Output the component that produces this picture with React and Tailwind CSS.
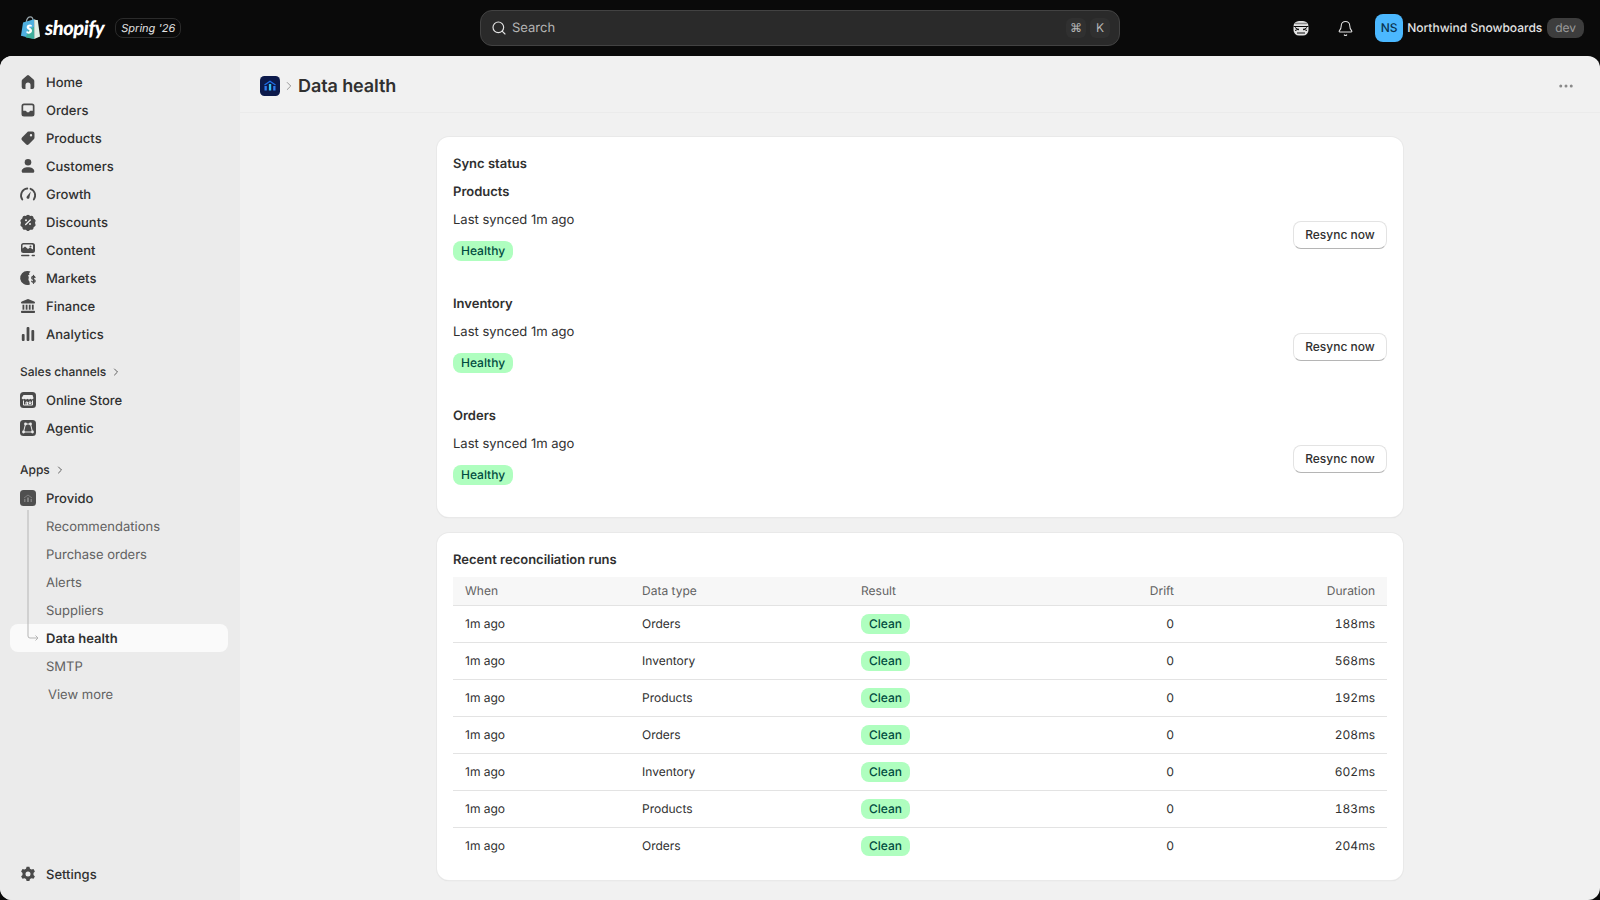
import React from "react";
import { Search, Bell, ChevronRight, Ellipsis } from "lucide-react";

const inter = "font-['Inter',sans-serif] [text-rendering:geometricPrecision]";

// sidebar icons, all on a 20 box
const HomeIcon = () => (
  <path d="M9 3.400a1.500 1.500 0 0 1 2 0l4.600 4a2 2 0 0 1 .7 1.500V15a2 2 0 0 1-2 2H12.500v-4a2.500 2.500 0 0 0-5 0v4H5.700a2 2 0 0 1-2-2V8.900a2 2 0 0 1 .7-1.500z" />
);
const OrdersIcon = () => (
  <path fillRule="evenodd" d="M6 3.500h8A2.500 2.500 0 0 1 16.500 6v8a2.500 2.500 0 0 1-2.500 2.500H6A2.500 2.500 0 0 1 3.500 14V6A2.500 2.500 0 0 1 6 3.500m0 1.700a.8.8 0 0 0-.8.8v4.800h2.300c.5 0 .8.300 1 .7l.4.8h2.200l.4-.8c.2-.4.5-.7 1-.7h2.300V6a.8.8 0 0 0-.8-.8z" />
);
const ProductsIcon = () => (
  <path fillRule="evenodd" d="M10.500 3.500h4A2 2 0 0 1 16.500 5.500v4a2.500 2.500 0 0 1-.7 1.700l-5 5a2 2 0 0 1-2.800 0l-4-4a2 2 0 0 1 0-2.800l5-5a2.500 2.500 0 0 1 1.500-.9M13 6a1.200 1.200 0 1 0 0 2.400A1.200 1.200 0 0 0 13 6" />
);
const CustomersIcon = () => (
  <>
    <circle cx="10" cy="6.300" r="3.300" />
    <path d="M3.700 15.200c0-2.500 2.800-4 6.300-4s6.300 1.500 6.300 4c0 1-.7 1.600-1.600 1.600H5.300c-.9 0-1.600-.6-1.600-1.600" />
  </>
);
const GrowthIcon = () => (
  <>
    <path fill="none" stroke="currentColor" strokeWidth="1.800" strokeLinecap="round" d="M4.300 15.500a7 7 0 0 1 5-11M12.500 4.800a7 7 0 0 1 3.300 10.700" />
    <path d="M12.800 7.500l-1.300 5.600a1.500 1.500 0 1 1-2.700-.6z" />
  </>
);
const DiscountsIcon = () => (
  <>
    <path fillRule="evenodd" d="M8.700 3.200a2 2 0 0 1 2.600 0l.9.7 1.200-.1a2 2 0 0 1 2.100 1.700l.2 1.100 1 .7a2 2 0 0 1 .7 2.500l-.5 1 .5 1.100a2 2 0 0 1-.7 2.500l-1 .6-.2 1.200a2 2 0 0 1-2.100 1.600l-1.200-.1-.9.800a2 2 0 0 1-2.600 0l-.9-.8-1.200.1a2 2 0 0 1-2.100-1.600l-.2-1.200-1-.6a2 2 0 0 1-.7-2.500l.5-1.100-.5-1a2 2 0 0 1 .7-2.500l1-.7.2-1.100a2 2 0 0 1 2.100-1.700l1.200.1z" />
    <path fill="none" stroke="#ebebeb" strokeWidth="1.400" strokeLinecap="round" d="M12.300 8l-4.600 4.400" />
    <circle cx="8" cy="8.300" r="1" fill="#ebebeb" />
    <circle cx="12" cy="12.100" r="1" fill="#ebebeb" />
  </>
);
const ContentIcon = () => (
  <>
    <path fillRule="evenodd" d="M5.500 3h9A2.500 2.500 0 0 1 17 5.500v5a2.500 2.500 0 0 1-2.500 2.500h-9A2.500 2.500 0 0 1 3 10.500v-5A2.500 2.500 0 0 1 5.500 3m0 1.500a1 1 0 0 0-1 1v3l2.500-2 3 2.500 2-1.500 3 2V5.500a1 1 0 0 0-1-1z" />
    <circle cx="12.500" cy="6.500" r="1" />
    <rect x="3" y="14.800" width="8.500" height="1.500" rx=".75" />
    <rect x="13.500" y="14.800" width="3.500" height="1.500" rx=".75" />
  </>
);
const MarketsIcon = () => (
  <>
    <path d="M9.800 3a7 7 0 0 1 2.700.5L11 5.200l.6 1.300-1.600 1 .8 1.500-.4 3 1 1.500.5 2.900a7 7 0 1 1-2.100-13.400" />
    <path fill="none" stroke="currentColor" strokeWidth="1.300" strokeLinecap="round" d="M17 9.500c-.3-.7-.9-1-1.600-1-1 0-1.700.6-1.700 1.400 0 1.900 3.500 1 3.500 3 0 .8-.8 1.400-1.800 1.400-.7 0-1.400-.4-1.700-1M15.500 7.300v8" />
  </>
);
const FinanceIcon = () => (
  <>
    <path d="M9.300 3.200a2 2 0 0 1 1.400 0l5.500 2.300c.5.200.8.600.8 1.100v.2c0 .4-.3.700-.7.700H3.700c-.4 0-.7-.3-.7-.7v-.2c0-.5.300-.9.800-1.100z" />
    <rect x="4.500" y="8.700" width="1.800" height="5" />
    <rect x="7.700" y="8.700" width="1.800" height="5" />
    <rect x="10.800" y="8.700" width="1.800" height="5" />
    <rect x="13.900" y="8.700" width="1.800" height="5" />
    <rect x="3" y="14.700" width="14" height="2.300" rx=".8" />
  </>
);
const AnalyticsIcon = () => (
  <>
    <rect x="3.800" y="10" width="2.800" height="7" rx="1" />
    <rect x="8.600" y="3" width="2.800" height="14" rx="1" />
    <rect x="13.400" y="6" width="2.800" height="11" rx="1" />
  </>
);
const SettingsIcon = () => (
  <path fillRule="evenodd" d="M8.600 2.800h2.800l.6 2 1.500.8 2-.5 1.400 2.400-1.400 1.500v1.900l1.400 1.500-1.400 2.400-2-.5-1.500.8-.6 2H8.600l-.6-2-1.500-.8-2 .5-1.400-2.400 1.400-1.500V9l-1.400-1.500 1.400-2.400 2 .5L8 4.800zM10 7.500a2.500 2.500 0 1 0 0 5 2.500 2.500 0 0 0 0-5" />
);

const Glyph = ({ children }) => (
  <svg viewBox="0 0 20 20" fill="currentColor" className="w-5 h-5 shrink-0 text-[#4a4a4a]">
    {children}
  </svg>
);

// rounded square tiles used by sales channels and apps
const OnlineStoreIcon = () => (
  <svg viewBox="0 0 16 16" className="w-4 h-4 shrink-0">
    <rect width="16" height="16" rx="3.500" fill="#4a4a4a" />
    <path d="M3.500 3h9l1 3a1.700 1.700 0 0 1-3 .8 1.800 1.800 0 0 1-3 0 1.800 1.800 0 0 1-3 0 1.700 1.700 0 0 1-2.900-.8z" fill="#ebebeb" />
    <path d="M3.500 8.500v4.500h9V8.500M6 13v-3h1.500v3M9 10h2v1.500H9z" fill="none" stroke="#ebebeb" strokeWidth="1" />
  </svg>
);
const AgenticIcon = () => (
  <svg viewBox="0 0 16 16" className="w-4 h-4 shrink-0">
    <rect width="16" height="16" rx="3.500" fill="#4a4a4a" />
    <path d="M5.500 4h5l2 8h-9z" fill="none" stroke="#ebebeb" strokeWidth="1" />
    <circle cx="5.500" cy="4" r="1.400" fill="#ebebeb" />
    <circle cx="10.500" cy="4" r="1.400" fill="#ebebeb" />
    <circle cx="3.500" cy="12" r="1.400" fill="#ebebeb" />
    <circle cx="12.500" cy="12" r="1.400" fill="#ebebeb" />
  </svg>
);
const ProvidoIcon = () => (
  <svg viewBox="0 0 16 16" className="w-4 h-4 shrink-0">
    <rect width="16" height="16" rx="3.500" fill="#4f4f4f" />
    <path d="M4 8l4-3 4 3" fill="none" stroke="#7d7d7d" strokeWidth="1" />
    <rect x="4" y="9" width="1.500" height="3" fill="#7d7d7d" />
    <rect x="7.200" y="7.500" width="1.600" height="4.500" fill="#8d8d8d" />
    <rect x="10.500" y="9" width="1.500" height="3" fill="#7d7d7d" />
  </svg>
);

const navItems = [
  { label: "Home", icon: HomeIcon },
  { label: "Orders", icon: OrdersIcon },
  { label: "Products", icon: ProductsIcon },
  { label: "Customers", icon: CustomersIcon },
  { label: "Growth", icon: GrowthIcon },
  { label: "Discounts", icon: DiscountsIcon },
  { label: "Content", icon: ContentIcon },
  { label: "Markets", icon: MarketsIcon },
  { label: "Finance", icon: FinanceIcon },
  { label: "Analytics", icon: AnalyticsIcon },
];

const subItems = ["Recommendations", "Purchase orders", "Alerts", "Suppliers"];

const syncRows = ["Products", "Inventory", "Orders"];

const runs = [
  { type: "Orders", ms: "188ms" },
  { type: "Inventory", ms: "568ms" },
  { type: "Products", ms: "192ms" },
  { type: "Orders", ms: "208ms" },
  { type: "Inventory", ms: "602ms" },
  { type: "Products", ms: "183ms" },
  { type: "Orders", ms: "204ms" },
];

const tableCols = "grid grid-cols-[177px_219px_191px_122px_1fr] items-center";

const NavRow = ({ icon: Icon, label }) => (
  <a className="flex items-center h-7 pl-[18px] text-[13px] font-medium text-[#303030]">
    <span className="w-7 flex shrink-0">
      <Glyph>
        <Icon />
      </Glyph>
    </span>
    <span className="pt-1">{label}</span>
  </a>
);

const TileRow = ({ tile, label }) => (
  <a className="flex items-center h-7 pl-5 text-[13px] font-medium text-[#303030]">
    <span className="w-[26px] flex shrink-0">{tile}</span>
    <span className="pt-1">{label}</span>
  </a>
);

const SubRow = ({ label, className = "pl-[46px]" }) => (
  <a className={`flex items-center h-7 text-[13px] text-[#616161] ${className}`}>
    <span className="pt-1">{label}</span>
  </a>
);

const SectionHead = ({ label, className }) => (
  <div className={`flex items-center h-6 pl-5 gap-1 text-xs font-medium text-[#303030] ${className}`}>
    {label}
    <ChevronRight size={12} strokeWidth={1.75} className="text-[#4a4a4a]" />
  </div>
);

const Badge = ({ children }) => (
  <span className="inline-flex items-center h-5 px-2 rounded-lg bg-[#affebf] text-xs font-medium text-[#014b40]">
    {children}
  </span>
);

const ShopifyBag = () => (
  <svg viewBox="0 0 22 25" className="w-[21px] h-6 shrink-0">
    <path d="M6.500 6.500C7 3 8.700.8 11 .8c1.500 0 2.500 1.400 2.800 4" fill="none" stroke="#9aa7ac" strokeWidth="1.300" />
    <path d="M1 20.500L3.200 6.800l11.600-3.500.2 20.700z" fill="#4fb0e0" />
    <path d="M9 14l6-3v13L6 22.500z" fill="#3fae9c" />
    <path d="M14.800 3.300l2 .8 1.800.1L21 21.500 15 24z" fill="#dfeee6" />
    <path d="M12.500 9.500c-.6-.4-1.400-.6-2.200-.6-2 0-3.300 1.200-3.300 2.800 0 2.400 3 2.500 3 3.800 0 .5-.4.800-1 .8-.9 0-1.900-.6-1.900-.6l-.5 1.900s1 .8 2.500.8c2 0 3.500-1.300 3.500-3.100 0-2.500-3-2.800-3-3.800 0-.3.2-.7 1-.7.7 0 1.400.3 1.400.3z" fill="#fff" />
  </svg>
);

const GogglesIcon = () => (
  <svg viewBox="0 0 20 20" className="w-5 h-5">
    <rect x="2.500" y="3" width="15" height="14.500" rx="5.500" fill="#e3e3e3" />
    <rect x="4" y="4.800" width="12" height="1.500" rx=".7" fill="#8a8a8a" />
    <path d="M2.500 8.500h15" stroke="#0a0a0a" strokeWidth="1" />
    <path d="M4 9.500l4 2.500M16 9.500l-4 2.500M4 12.500l4-1.500M16 12.500l-4-1.500" stroke="#0a0a0a" strokeWidth="1" />
    <path d="M6 15h8" stroke="#0a0a0a" strokeWidth="1" />
  </svg>
);

const ProvidoLogo = () => (
  <svg viewBox="0 0 20 20" className="w-5 h-5 shrink-0">
    <rect width="20" height="20" rx="4.500" fill="#0c1a4b" />
    <path d="M4.500 9L10 5.200 15.500 9" fill="none" stroke="#1e6fe8" strokeWidth="1.300" />
    <rect x="4.500" y="10" width="2.300" height="4.500" fill="#2f7bf0" />
    <rect x="8.900" y="8" width="2.300" height="6.500" fill="#35c3f3" />
    <rect x="13.200" y="10" width="2.300" height="4.500" fill="#2f7bf0" />
  </svg>
);

export default function App() {
  return (
    <div className={`h-screen flex flex-col overflow-hidden bg-[#0a0a0a] ${inter}`}>
      <header className="h-14 shrink-0 flex items-center pl-5 pr-4">
        <div className="flex items-center w-[460px] shrink-0">
          <ShopifyBag />
          <span className="ml-1 font-['Lato',sans-serif] italic font-black text-[20px] tracking-[-0.4px] text-white">shopify</span>
          <span className="ml-[11px] flex items-center h-5 px-[5px] rounded-lg border border-[#2b2b2b] italic text-[11px] text-[#e3e3e3]">Spring '26</span>
        </div>
        <div className="w-[640px] h-9 flex items-center rounded-xl border border-[#424242] bg-[#2a2a2a] pl-2.5 pr-[9px]">
          <Search size={16} strokeWidth={1.75} className="text-[#e3e3e3]" />
          <span className="ml-[5px] pt-0.5 text-[13px] text-[#b5b5b5]">Search</span>
          <div className="ml-auto flex gap-1">
            <kbd className="w-5 h-5 flex items-center justify-center rounded-md bg-[#303030] text-xs text-[#b5b5b5] font-['DejaVu_Sans',sans-serif]">⌘</kbd>
            <kbd className="w-5 h-5 flex items-center justify-center rounded-md bg-[#303030] text-xs text-[#b5b5b5] font-['Inter',sans-serif]">K</kbd>
          </div>
        </div>
        <div className="ml-auto flex items-center">
          <GogglesIcon />
          <Bell size={17} strokeWidth={1.5} className="ml-[26px] text-[#e3e3e3]" />
          <span className="ml-[21px] w-7 h-7 flex items-center justify-center rounded-lg bg-[#4bb8ff] text-xs font-medium text-[#0a3350]">NS</span>
          <span className="ml-1 w-[136px] text-xs font-medium whitespace-nowrap text-[#e3e3e3]">Northwind Snowboards</span>
          <span className="ml-1 flex items-center h-5 px-2 rounded-lg bg-[#3d3d3d] text-xs text-[#9a9a9a]">dev</span>
        </div>
      </header>

      <div className="flex-1 min-h-0 flex rounded-xl overflow-hidden bg-[#f1f1f1]">
        <nav className="w-60 shrink-0 flex flex-col bg-[#ebebeb] py-3">
          {navItems.map((item) => (
            <NavRow key={item.label} {...item} />
          ))}
          <SectionHead label="Sales channels" className="mt-3 mb-0.5" />
          <TileRow tile={<OnlineStoreIcon />} label="Online Store" />
          <TileRow tile={<AgenticIcon />} label="Agentic" />
          <SectionHead label="Apps" className="mt-4 mb-0.5" />
          <TileRow tile={<ProvidoIcon />} label="Provido" />
          <div className="relative">
            <svg className="absolute left-[27px] -top-0.5 w-3 h-[134px] text-[#b5b5b5]" viewBox="0 0 12 134" fill="none" stroke="currentColor">
              <path d="M1 0v126a2 2 0 0 0 2 2h8M8.500 125.500l2.500 2.500-2.500 2.500" />
            </svg>
            {subItems.map((label) => (
              <SubRow key={label} label={label} />
            ))}
            <a className="ml-2.5 mr-3 flex items-center h-7 pl-9 rounded-lg bg-[#fafafa] text-[13px] font-semibold text-[#303030]">
              <span className="pt-1">Data health</span>
            </a>
            <SubRow label="SMTP" />
            <SubRow label="View more" className="pl-12" />
          </div>
          <div className="mt-auto">
            <NavRow icon={SettingsIcon} label="Settings" />
          </div>
        </nav>

        <main className="flex-1 min-w-0 flex flex-col">
          <div className="h-[57px] shrink-0 flex items-center pt-1 pl-5 pr-[25px] border-b border-[#ebebeb]">
            <ProvidoLogo />
            <ChevronRight size={14} strokeWidth={1.5} className="ml-0.5 mr-0.5 text-[#8a8a8a]" />
            <h1 className="pt-0.5 text-lg font-semibold tracking-[-0.1px] text-[#303030]">Data health</h1>
            <Ellipsis size={18} className="ml-auto text-[#8a8a8a]" />
          </div>

          <div className="w-[966px] mx-auto pt-6 flex flex-col gap-4">
            <section className="bg-white rounded-xl shadow-[0_0_0_1px_#e9e9e9,0_1px_1px_#d4d4d4] px-4 pt-[17px] pb-1">
              <h2 className="text-[13px] leading-5 font-semibold text-[#303030]">Sync status</h2>
              <div className="mt-2 flex flex-col gap-[5px]">
                {syncRows.map((name) => (
                  <div key={name} className="flex items-center justify-between pb-7">
                    <div className="flex flex-col items-start text-[13px] leading-5 text-[#303030]">
                      <span className="font-semibold">{name}</span>
                      <span className="mt-2 mb-[11px]">Last synced 1m ago</span>
                      <Badge>Healthy</Badge>
                    </div>
                    <button className="h-7 w-[94px] mt-[26px] rounded-lg border border-[#e3e3e3] border-b-[#b5b5b5] bg-white text-xs font-medium text-[#303030]">Resync now</button>
                  </div>
                ))}
              </div>
            </section>

            <section className="bg-white rounded-xl shadow-[0_0_0_1px_#e9e9e9,0_1px_1px_#d4d4d4] px-4 pt-[17px] pb-[15px]">
              <h2 className="text-[13px] leading-5 font-semibold text-[#303030]">Recent reconciliation runs</h2>
              <div className="mt-[7px] text-xs text-[#303030]">
                <div className={`${tableCols} h-[29px] px-3 bg-[#f7f7f7] border-b border-[#e3e3e3] text-[#616161]`}>
                  <span>When</span>
                  <span>Data type</span>
                  <span>Result</span>
                  <span className="text-right">Drift</span>
                  <span className="text-right">Duration</span>
                </div>
                {runs.map((run, i) => (
                  <div key={i} className={`${tableCols} h-[37px] px-3 border-b ${i < runs.length - 1 ? "border-[#e3e3e3]" : "border-transparent"}`}>
                    <span>1m ago</span>
                    <span>{run.type}</span>
                    <span><Badge>Clean</Badge></span>
                    <span className="text-right tabular-nums">0</span>
                    <span className="text-right tabular-nums">{run.ms}</span>
                  </div>
                ))}
              </div>
            </section>
          </div>
        </main>
      </div>
    </div>
  );
}
